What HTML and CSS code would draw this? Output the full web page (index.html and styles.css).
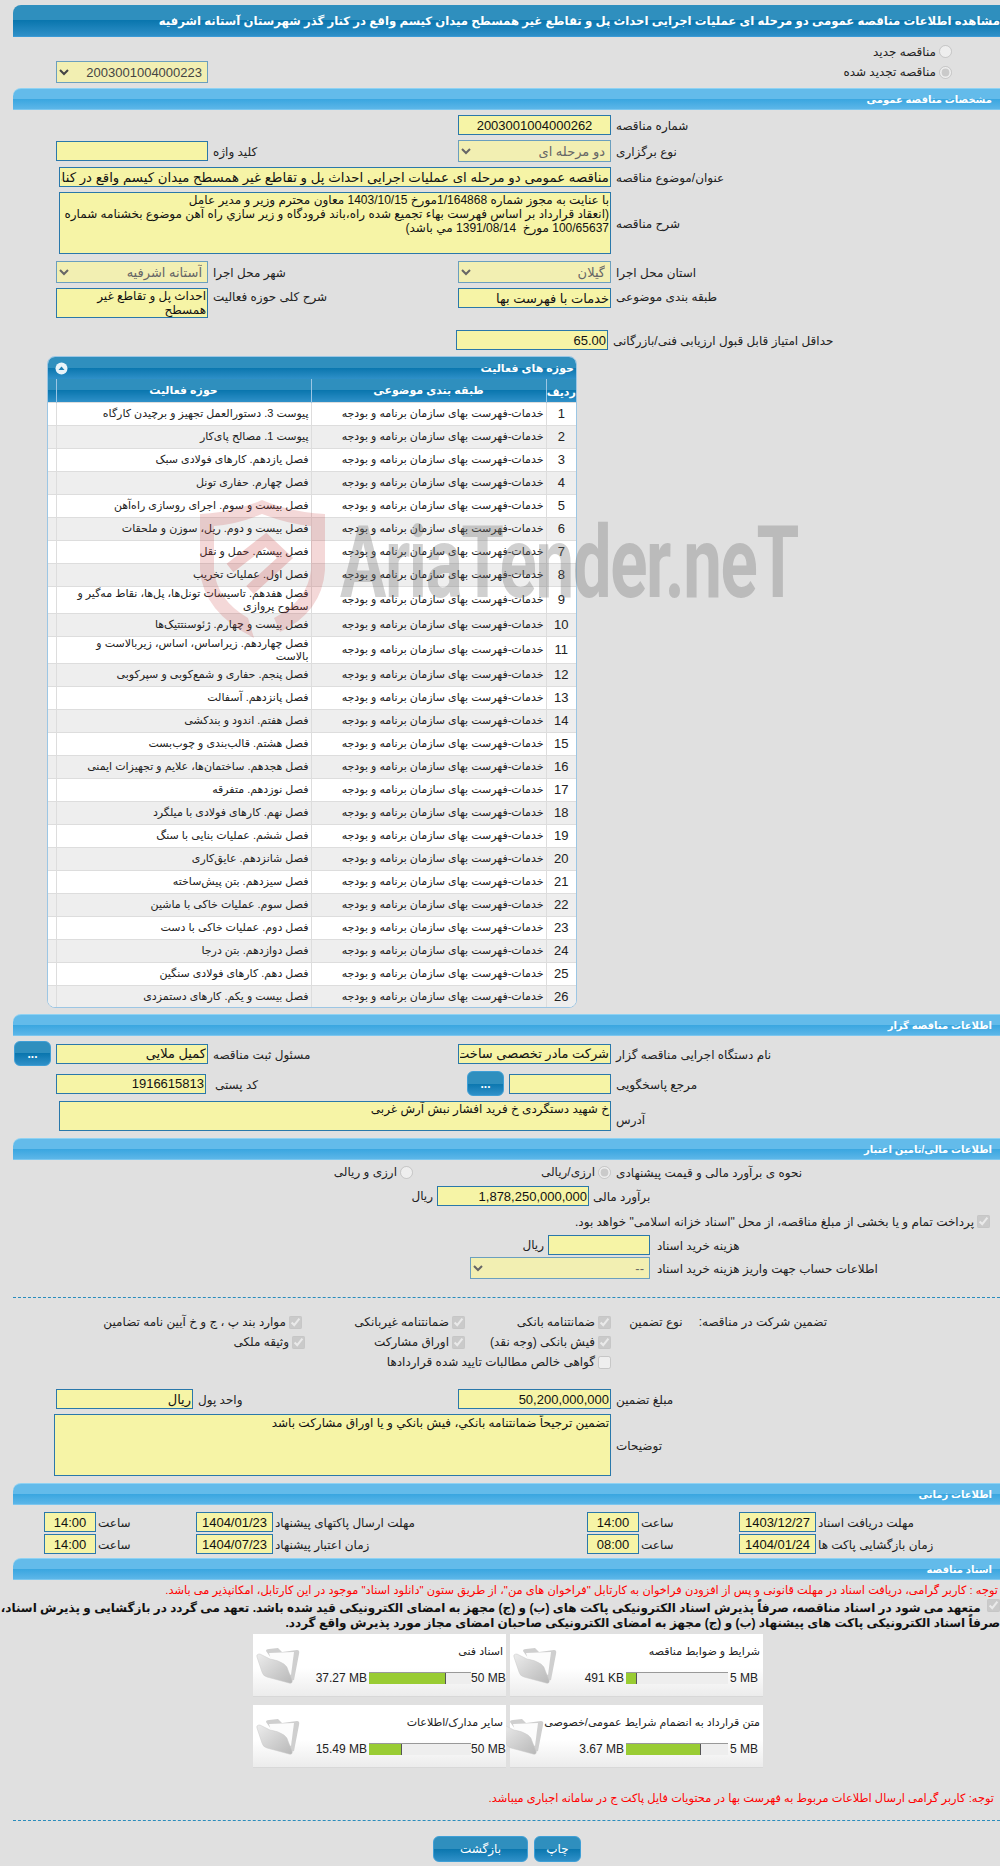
FILE: index.html
```html
<!DOCTYPE html>
<html lang="fa" dir="rtl">
<head>
    <meta charset="UTF-8">
    <title>مشاهده اطلاعات مناقصه</title>
    <link rel="stylesheet" href="styles.css">
</head>
<body>
<div class="page">

    <div class="main-title">مشاهده اطلاعات مناقصه عمومی دو مرحله ای عملیات اجرایی احداث پل و تقاطع غیر همسطح میدان کیسم واقع در کنار گذر شهرستان آستانه اشرفیه</div>

    <div class="radio-block">
        <div class="row radio-row">
            <label class="span-3 check-item radio-first"><input type="radio" name="kind" disabled> مناقصه جدید</label>
        </div>
        <div class="row">
            <label class="span-3 check-item radio-first"><input type="radio" name="kind" checked disabled> مناقصه تجدید شده</label>
            <select class="fld tall dark-val" disabled><option>2003001004000223</option></select>
        </div>
    </div>

    <div class="sec-title">مشخصات مناقصه عمومی</div>
    <div class="sec-body">
        <div class="row">
            <span class="lbl">شماره مناقصه</span>
            <input class="fld center-val" type="text" value="2003001004000262" readonly>
        </div>
        <div class="row">
            <span class="lbl">نوع برگزاری</span>
            <select class="fld tall" disabled><option>دو مرحله ای</option></select>
            <span class="lbl">کلید واژه</span>
            <input class="fld" type="text" readonly>
        </div>
        <div class="row">
            <span class="lbl">عنوان/موضوع مناقصه</span>
            <input class="fld wide" type="text" value="مناقصه عمومی دو مرحله ای عملیات اجرایی احداث پل و تقاطع غیر همسطح میدان کیسم واقع در کنار گذر شهرستان آستانه اشرفیه" readonly>
        </div>
        <div class="row">
            <span class="lbl">شرح مناقصه</span>
            <textarea class="fld wide desc" readonly>با عنایت به مجوز شماره 1/164868مورخ 1403/10/15 معاون محترم وزیر و مدیر عامل
(انعقاد قرارداد بر اساس فهرست بهاء تجمیع شده راه،باند فرودگاه و زیر سازي راه آهن موضوع بخشنامه شماره
100/65637 مورخ  1391/08/14 مي باشد)</textarea>
        </div>
        <div class="row gap-top">
            <span class="lbl">استان محل اجرا</span>
            <select class="fld tall" disabled><option>گیلان</option></select>
            <span class="lbl">شهر محل اجرا</span>
            <select class="fld tall" disabled><option>آستانه اشرفیه</option></select>
        </div>
        <div class="row top-row">
            <span class="lbl">طبقه بندی موضوعی</span>
            <input class="fld" type="text" value="خدمات با فهرست بها" readonly>
            <span class="lbl">شرح کلی حوزه فعالیت</span>
            <textarea class="fld activity" readonly>احداث پل و تقاطع غیر همسطح</textarea>
        </div>
        <div class="row score-row">
            <span class="lbl">حداقل امتیاز قابل قبول ارزیابی فنی/بازرگانی</span>
            <input class="fld" type="text" value="65.00" readonly>
        </div>
    </div>

    <div class="panel">
        <div class="panel-head">
            <span>حوزه های فعالیت</span>
            <svg class="collapse" width="13" height="13" viewBox="0 0 13 13"><circle cx="6.5" cy="6.5" r="6" fill="#e8f3f9"/><path d="M3.5 8 L6.5 4.5 L9.5 8 Z" fill="#1f80b4"/></svg>
        </div>
        <table class="grid">
            <colgroup><col class="c-num"><col class="c-cat"><col class="c-act"><col class="c-pad"></colgroup>
            <tr><th class="th-num">ردیف</th><th>طبقه بندی موضوعی</th><th>حوزه فعالیت</th><th></th></tr>
            <tr><td class="num">1</td><td>خدمات-فهرست بهای سازمان برنامه و بودجه</td><td>پیوست 3. دستورالعمل تجهیز و برچیدن کارگاه</td><td></td></tr>
            <tr><td class="num">2</td><td>خدمات-فهرست بهای سازمان برنامه و بودجه</td><td>پیوست 1. مصالح پای‌کار</td><td></td></tr>
            <tr><td class="num">3</td><td>خدمات-فهرست بهای سازمان برنامه و بودجه</td><td>فصل یازدهم. کارهای فولادی سبک</td><td></td></tr>
            <tr><td class="num">4</td><td>خدمات-فهرست بهای سازمان برنامه و بودجه</td><td>فصل چهارم. حفاری تونل</td><td></td></tr>
            <tr><td class="num">5</td><td>خدمات-فهرست بهای سازمان برنامه و بودجه</td><td>فصل بیست و سوم. اجرای روسازی راه‌آهن</td><td></td></tr>
            <tr><td class="num">6</td><td>خدمات-فهرست بهای سازمان برنامه و بودجه</td><td>فصل بیست و دوم. ریل، سوزن و ملحقات</td><td></td></tr>
            <tr><td class="num">7</td><td>خدمات-فهرست بهای سازمان برنامه و بودجه</td><td>فصل بیستم. حمل و نقل</td><td></td></tr>
            <tr><td class="num">8</td><td>خدمات-فهرست بهای سازمان برنامه و بودجه</td><td>فصل اول. عملیات تخریب</td><td></td></tr>
            <tr class="two-line"><td class="num">9</td><td>خدمات-فهرست بهای سازمان برنامه و بودجه</td><td>فصل هفدهم. تاسیسات تونل‌ها، پل‌ها، نقاط مه‌گیر و<br>سطوح پروازی</td><td></td></tr>
            <tr><td class="num">10</td><td>خدمات-فهرست بهای سازمان برنامه و بودجه</td><td>فصل بیست و چهارم. ژئوسنتتیک‌ها</td><td></td></tr>
            <tr class="two-line"><td class="num">11</td><td>خدمات-فهرست بهای سازمان برنامه و بودجه</td><td>فصل چهاردهم. زیراساس، اساس، زیربالاست  و<br>بالاست</td><td></td></tr>
            <tr><td class="num">12</td><td>خدمات-فهرست بهای سازمان برنامه و بودجه</td><td>فصل پنجم. حفاری و شمع‌کوبی و سپرکوبی</td><td></td></tr>
            <tr><td class="num">13</td><td>خدمات-فهرست بهای سازمان برنامه و بودجه</td><td>فصل پانزدهم. آسفالت</td><td></td></tr>
            <tr><td class="num">14</td><td>خدمات-فهرست بهای سازمان برنامه و بودجه</td><td>فصل هفتم. اندود و بندکشی</td><td></td></tr>
            <tr><td class="num">15</td><td>خدمات-فهرست بهای سازمان برنامه و بودجه</td><td>فصل هشتم. قالب‌بندی و چوب‌بست</td><td></td></tr>
            <tr><td class="num">16</td><td>خدمات-فهرست بهای سازمان برنامه و بودجه</td><td>فصل هجدهم. ساختمان‌ها، علایم و تجهیزات ایمنی</td><td></td></tr>
            <tr><td class="num">17</td><td>خدمات-فهرست بهای سازمان برنامه و بودجه</td><td>فصل نوزدهم. متفرقه</td><td></td></tr>
            <tr><td class="num">18</td><td>خدمات-فهرست بهای سازمان برنامه و بودجه</td><td>فصل نهم. کارهای فولادی با میلگرد</td><td></td></tr>
            <tr><td class="num">19</td><td>خدمات-فهرست بهای سازمان برنامه و بودجه</td><td>فصل ششم. عملیات بنایی با سنگ</td><td></td></tr>
            <tr><td class="num">20</td><td>خدمات-فهرست بهای سازمان برنامه و بودجه</td><td>فصل شانزدهم. عایق‌کاری</td><td></td></tr>
            <tr><td class="num">21</td><td>خدمات-فهرست بهای سازمان برنامه و بودجه</td><td>فصل سیزدهم. بتن پیش‌ساخته</td><td></td></tr>
            <tr><td class="num">22</td><td>خدمات-فهرست بهای سازمان برنامه و بودجه</td><td>فصل سوم. عملیات خاکی با ماشین</td><td></td></tr>
            <tr><td class="num">23</td><td>خدمات-فهرست بهای سازمان برنامه و بودجه</td><td>فصل دوم. عملیات خاکی با دست</td><td></td></tr>
            <tr><td class="num">24</td><td>خدمات-فهرست بهای سازمان برنامه و بودجه</td><td>فصل دوازدهم. بتن درجا</td><td></td></tr>
            <tr><td class="num">25</td><td>خدمات-فهرست بهای سازمان برنامه و بودجه</td><td>فصل دهم. کارهای فولادی سنگین</td><td></td></tr>
            <tr><td class="num">26</td><td>خدمات-فهرست بهای سازمان برنامه و بودجه</td><td>فصل بیست و یکم. کارهای دستمزدی</td><td></td></tr>
        </table>
    </div>

    <div class="sec-title after-panel">اطلاعات مناقصه گزار</div>
    <div class="sec-body">
        <div class="row row-btn">
            <span class="lbl">نام دستگاه اجرایی مناقصه گزار</span>
            <input class="fld" type="text" value="شرکت مادر تخصصی ساخت و توسعه زیربناهای حمل و نقل" readonly>
            <span class="lbl">مسئول ثبت مناقصه</span>
            <input class="fld" type="text" value="کمیل ملایی" readonly>
            <button class="btn btn-dots" type="button">...</button>
        </div>
        <div class="row row-ref">
            <span class="lbl">مرجع پاسخگویی</span>
            <input class="fld" type="text" readonly>
            <button class="btn btn-dots" type="button">...</button>
            <span class="lbl lbl-postal">کد پستی</span>
            <input class="fld postal" type="text" value="1916615813" readonly>
        </div>
        <div class="row">
            <span class="lbl lbl-low">آدرس</span>
            <textarea class="fld wide addr" readonly>خ شهید دستگردی خ فرید افشار نبش آرش غربی</textarea>
        </div>
    </div>

    <div class="sec-title after-addr">اطلاعات مالی/تامین اعتبار</div>
    <div class="finance">
        <div class="line line-mode">
            <span class="lbl-f">نحوه ی برآورد مالی و قیمت پیشنهادی</span>
            <label class="check-item mode-a"><input type="radio" name="cur" checked disabled> ارزی/ریالی</label>
            <label class="check-item mode-b"><input type="radio" name="cur" disabled> ارزی و ریالی</label>
        </div>
        <div class="line line-budget">
            <span class="lbl-f budget-lbl">برآورد مالی</span>
            <input class="fld" type="text" value="1,878,250,000,000" readonly>
            <span class="unit">ریال</span>
        </div>
        <label class="check-item line-treasury"><input type="checkbox" checked disabled> پرداخت تمام و یا بخشی از مبلغ مناقصه، از محل "اسناد خزانه اسلامی" خواهد بود.</label>
        <div class="line line-cost">
            <span class="lbl-f cost-lbl">هزینه خرید اسناد</span>
            <input class="fld cost" type="text" readonly>
            <span class="unit">ریال</span>
        </div>
        <div class="line line-account">
            <span class="lbl-f cost-lbl">اطلاعات حساب جهت واریز هزینه خرید اسناد</span>
            <select class="fld tall account" disabled><option>--</option></select>
        </div>
    </div>

    <div class="dash"></div>

    <div class="guarantee">
        <div class="g-head"><span>تضمین شرکت در مناقصه:</span><span>نوع تضمین</span></div>
        <label class="check-item"><input type="checkbox" checked disabled> ضمانتنامه بانکی</label>
        <label class="check-item"><input type="checkbox" checked disabled> ضمانتنامه غیربانکی</label>
        <label class="check-item g-inset"><input type="checkbox" checked disabled> موارد بند پ ، ج و خ آیین نامه تضامین</label>
        <span></span>
        <label class="check-item"><input type="checkbox" checked disabled> فیش بانکی (وجه نقد)</label>
        <label class="check-item"><input type="checkbox" checked disabled> اوراق مشارکت</label>
        <label class="check-item"><input type="checkbox" checked disabled> وثیقه ملکی</label>
        <span></span>
        <label class="check-item g-wide"><input type="checkbox" disabled> گواهی خالص مطالبات تایید شده قراردادها</label>
    </div>

    <div class="sec-body amount">
        <div class="row row-amount">
            <span class="lbl">مبلغ تضمین</span>
            <input class="fld" type="text" value="50,200,000,000" readonly>
            <span class="lbl">واحد پول</span>
            <input class="fld" type="text" value="ریال" readonly>
        </div>
        <div class="row">
            <span class="lbl">توضیحات</span>
            <textarea class="fld wide note" readonly>تضمین ترجیحاً ضمانتنامه بانکي، فيش بانکي و يا اوراق مشارکت باشد</textarea>
        </div>
    </div>

    <div class="sec-title after-note">اطلاعات زمانی</div>
    <div class="times">
        <span class="lbl">مهلت دریافت اسناد</span>
        <input class="fld center-val" type="text" value="1403/12/27" readonly>
        <span class="lbl">ساعت</span>
        <input class="fld center-val" type="text" value="14:00" readonly>
        <span class="lbl">مهلت ارسال پاکتهای پیشنهاد</span>
        <input class="fld center-val" type="text" value="1404/01/23" readonly>
        <span class="lbl">ساعت</span>
        <input class="fld center-val" type="text" value="14:00" readonly>

        <span class="lbl">زمان بازگشایی پاکت ها</span>
        <input class="fld center-val" type="text" value="1404/01/24" readonly>
        <span class="lbl">ساعت</span>
        <input class="fld center-val" type="text" value="08:00" readonly>
        <span class="lbl">زمان اعتبار پیشنهاد</span>
        <input class="fld center-val" type="text" value="1404/07/23" readonly>
        <span class="lbl">ساعت</span>
        <input class="fld center-val" type="text" value="14:00" readonly>
    </div>

    <div class="sec-title after-times">اسناد مناقصه</div>
    <p class="warn warn-top">توجه : کاربر گرامی، دریافت اسناد در مهلت قانونی و پس از افزودن فراخوان به کارتابل "فراخوان های من"، از طریق ستون "دانلود اسناد" موجود در این کارتابل، امکانپذیر می باشد.</p>
    <p class="pledge"><input type="checkbox" checked disabled> متعهد می شود در اسناد مناقصه، صرفاً پذیرش اسناد الکترونیکی پاکت های (ب) و (ج) مجهز به امضای الکترونیکی قید شده باشد. تعهد می گردد در بازگشایی و پذیرش اسناد،<br>صرفاً اسناد الکترونیکی پاکت های پیشنهاد (ب) و (ج) مجهز به امضای الکترونیکی صاحبان امضای مجاز مورد پذیرش واقع گردد.</p>

    <svg width="0" height="0" class="defs">
        <defs>
            <linearGradient id="fold" x1="0" y1="0" x2="1" y2="1"><stop offset="0" stop-color="#ececec"/><stop offset="1" stop-color="#b8b8b8"/></linearGradient>
            <symbol id="folder" viewBox="0 0 44 38">
                <path d="M10 4 Q10 2 13 2 L22 1 L26 5 L41 3 Q44 3 43 7 L38 33 L32 35 Z" fill="#cfcfcf"/>
                <path d="M13 6 L38 5 L35 28 L17 20 Z" fill="#fcfcfc"/>
                <path d="M1 10 Q0 7 4 7 L14 12 Q22 13 28 17 Q31 19 32 23 L36 33 Q37 37 33 36 L11 30 Q7 29 6 25 Z" fill="url(#fold)" stroke="#c8c8c8" stroke-width=".5"/>
            </symbol>
        </defs>
    </svg>

    <div class="tiles">
        <div class="tile">
            <div class="tile-info">
                <div class="tile-name">شرایط و ضوابط مناقصه</div>
                <div class="meter"><span class="max">5 MB</span><span class="track"><span class="fill" style="width:11%"></span></span><span class="used">491 KB</span></div>
            </div>
            <svg class="folder"><use href="#folder"/></svg>
        </div>
        <div class="tile">
            <div class="tile-info">
                <div class="tile-name">اسناد فنی</div>
                <div class="meter"><span class="max">50 MB</span><span class="track"><span class="fill" style="width:75%"></span></span><span class="used">37.27 MB</span></div>
            </div>
            <svg class="folder"><use href="#folder"/></svg>
        </div>
        <div class="tile">
            <div class="tile-info">
                <div class="tile-name">متن قرارداد به انضمام شرایط عمومی/خصوصی</div>
                <div class="meter"><span class="max">5 MB</span><span class="track"><span class="fill" style="width:74%"></span></span><span class="used">3.67 MB</span></div>
            </div>
            <svg class="folder"><use href="#folder"/></svg>
        </div>
        <div class="tile">
            <div class="tile-info">
                <div class="tile-name">سایر مدارک/اطلاعات</div>
                <div class="meter"><span class="max">50 MB</span><span class="track"><span class="fill" style="width:32%"></span></span><span class="used">15.49 MB</span></div>
            </div>
            <svg class="folder"><use href="#folder"/></svg>
        </div>
    </div>

    <p class="warn warn-bottom">توجه: کاربر گرامی ارسال اطلاعات مربوط به فهرست بها در محتویات فایل پاکت ج در سامانه اجباری میباشد.</p>

    <div class="dash dash-end"></div>

    <div class="actions">
        <button class="btn btn-print" type="button">چاپ</button>
        <button class="btn btn-back" type="button">بازگشت</button>
    </div>

    <!-- watermark -->
    <svg class="wm-shield" width="126" height="140" viewBox="0 0 126 140">
        <path d="M0 14 Q35 12 62 0 Q90 12 125 14 L125 70 Q122 112 80 132 L74 118 Q108 100 111 70 L111 26 Q88 24 62 14 Q38 24 14 26 L14 70 Q17 100 48 118 L54 138 Q3 112 0 70 Z" fill="#c83c3c" opacity=".2"/>
        <path d="M30 68 L66 40 L85 58 L50 90" fill="none" stroke="#c83c3c" stroke-width="11" opacity=".24"/>
    </svg>
    <div class="wm-text">AriaTender.neT</div>
</div>
</body>
</html>
```

FILE: styles.css
```css
* {
    box-sizing: border-box;
}

html, body {
    margin: 0;
    padding: 0;
}

body {
    background-color: #e0e0e0;
    font-family: "Liberation Sans", "DejaVu Sans", sans-serif;
    font-size: 12px;
    color: #222;
}

.page {
    position: relative;
    width: 1000px;
    height: 1866px;
    overflow: hidden;
}

/* title bars */
.main-title {
    margin: 5px 0 0 13px;
    height: 32px;
    line-height: 32px;
    border-radius: 8px 0 0 0;
    border-bottom: 1px solid #3a9ad6;
    background: linear-gradient(#2f8fbe 0, #2f8fbe 50%, #0a76ae 50%, #2f90c8 100%);
    color: #fff;
    font-size: 11.7px;
    font-weight: bold;
    white-space: nowrap;
}

.sec-title {
    margin-left: 13px;
    height: 22px;
    line-height: 21px;
    padding-right: 8px;
    border-radius: 8px 0 0 0;
    border-top: 1px solid #8ed2f3;
    border-bottom: 1px solid #7cc6ee;
    background: linear-gradient(#63bbea 0, #63bbea 50%, #39a6e0 50%, #5cb6e8 100%);
    color: #fff;
    font-size: 10px;
    font-weight: bold;
}

.after-panel { margin-top: 6px; }
.after-addr { margin-top: 7px; }
.after-note { margin-top: 7px; }
.after-times { margin-top: 4px; }

/* form rows */
.radio-block {
    display: flex;
    flex-direction: column;
    height: 51px;
    padding-top: 5px;
}

.radio-row {
    height: 19px;
}

.sec-body {
    display: flex;
    flex-direction: column;
    gap: 5px;
    padding-top: 5px;
}

.row {
    display: grid;
    grid-template-columns: 384px 153px 240px 152px;
    column-gap: 5px;
    align-items: center;
}

.top-row {
    align-items: start;
}

.gap-top {
    margin-top: 2px;
}

.score-row {
    grid-template-columns: 387px 152px;
    margin-top: 7px;
}

.row-btn {
    grid-template-columns: 384px 153px 240px 152px 37px;
}

.row-ref {
    grid-template-columns: 384px 102px 38px 248px 152px;
}

.row-amount {
    grid-template-columns: 384px 153px 255px 137px;
}

.span-3 {
    grid-column: span 3;
}

.lbl {
    text-align: left;
    white-space: nowrap;
    padding-top: 2px;
}

.lbl-low {
    padding-top: 8px;
}

.lbl-postal {
    padding-left: 2px;
}

/* fields */
.fld {
    display: block;
    width: 100%;
    height: 20px;
    margin: 0;
    padding: 0 1px;
    border: 1px solid #2a78aa;
    border-radius: 0;
    background-color: #f6f4a6;
    font-family: "Liberation Sans", "DejaVu Sans", sans-serif;
    font-size: 13px;
    color: #111;
    outline: none;
}

select.fld {
    opacity: 1;
    padding: 0 1px 0 4px;
    border-color: #6b9fbe;
    background-color: #f2efb2;
    color: #666;
}

select.dark-val {
    color: #444;
}

.tall {
    height: 22px;
}

.wide {
    grid-column: span 3;
    width: 552px;
    font-size: 13.3px;
}

.desc {
    height: 62px;
    line-height: 14px;
    font-size: 12px;
    resize: none;
    overflow: hidden;
    white-space: pre;
}

.activity {
    height: 30px;
    line-height: 14px;
    font-size: 12px;
    resize: none;
    overflow: hidden;
}

.addr {
    height: 30px;
    font-size: 12px;
    resize: none;
    overflow: hidden;
}

.note {
    width: 557px;
    height: 62px;
    font-size: 12px;
    line-height: 16px;
    resize: none;
    overflow: hidden;
}

.postal {
    width: 150px;
    margin-right: 2px;
}

input.fld[type="text"] {
    text-align: right;
}

input.center-val[type="text"] {
    text-align: center;
}

/* activity table panel */
.panel {
    margin: 6px 423px 0 47px;
    height: 652px;
    border: 1px solid #9cc6e4;
    border-radius: 8px;
    overflow: hidden;
    background: #fff;
}

.panel-head {
    display: flex;
    justify-content: space-between;
    align-items: center;
    height: 22px;
    padding: 0 2px 0 7px;
    background: linear-gradient(#2f8fbe 0, #2f8fbe 50%, #0a76ae 50%, #2f90c8 100%);
    color: #fff;
    font-size: 11px;
    font-weight: bold;
}

.collapse {
    display: block;
}

.grid {
    width: 528px;
    table-layout: fixed;
    border-collapse: collapse;
    font-size: 11px;
}

.c-num { width: 30px; }
.c-cat { width: 235px; }
.c-act { width: 255px; }
.c-pad { width: 10px; }

.grid th {
    height: 23px;
    border-left: 1px solid #9cc6e4;
    background: linear-gradient(#2f8fbe 0, #2f8fbe 50%, #0a76ae 50%, #2f90c8 100%);
    color: #fff;
    font-size: 11px;
    padding: 0;
}

.grid .th-num {
    padding-top: 4px;
}

.grid td {
    height: 23px;
    padding: 0 2px;
    border-left: 1px solid #ddd;
    border-top: 1px solid #ddd;
    line-height: 13px;
    text-align: right;
}

.grid tr:nth-child(odd) td {
    background-color: #eee;
}

.grid .two-line td {
    height: 27px;
}

.grid .num {
    text-align: center;
    font-size: 13px;
}

/* finance block */
.finance {
    height: 137px;
    padding-top: 5px;
}

.line {
    display: flex;
    align-items: center;
}

.line-mode {
    height: 14px;
}

.lbl-f {
    width: 384px;
    text-align: left;
    white-space: nowrap;
    padding-top: 2px;
}

.check-item {
    display: flex;
    align-items: center;
    gap: 3px;
    white-space: nowrap;
}

.check-item input {
    margin: 0;
    flex: none;
}

.radio-first {
    padding-right: 48px;
}

.mode-a {
    margin-right: 5px;
    width: 198px;
}

.line-budget {
    margin-top: 7px;
    height: 20px;
}

.budget-lbl {
    width: 411px;
    padding-left: 4px;
}

.line-budget .fld {
    width: 152px;
}

.unit {
    margin-right: 4px;
}

.line-treasury {
    margin: 8px 10px 0 0;
    height: 15px;
}

.line-cost {
    margin-top: 6px;
    height: 20px;
}

.cost-lbl {
    width: 350px;
    padding-left: 7px;
}

.cost {
    width: 102px;
}

.line-account {
    margin-top: 2px;
    height: 22px;
}

.account {
    width: 180px;
}

.dash {
    margin: 0 0 0 13px;
    border-top: 1px dashed #2a8cbc;
}

/* guarantee types */
.guarantee {
    display: grid;
    grid-template-columns: 389px 146px 160px 305px;
    grid-auto-rows: 20px;
    align-items: center;
    margin-top: 14px;
}

.g-head {
    display: flex;
    gap: 16px;
    padding-right: 173px;
    white-space: nowrap;
}

.g-inset {
    padding-right: 3px;
}

.g-wide {
    grid-column: span 3;
}

.amount {
    margin-top: 12px;
}

/* times */
.times {
    display: grid;
    grid-template-columns: 182px 77px 96px 52px 310px 77px 96px 52px;
    grid-auto-rows: 20px;
    column-gap: 2px;
    row-gap: 2px;
    align-items: center;
    padding-top: 7px;
}

/* documents */
.warn {
    margin: 0;
    color: #f00;
    white-space: nowrap;
}

.warn-top {
    margin: 3px 2px 0 0;
    font-size: 11.4px;
    line-height: 14px;
}

.pledge {
    margin: 2px 0 0 0;
    font-size: 12px;
    font-weight: bold;
    line-height: 15px;
    white-space: nowrap;
    color: #111;
}

.pledge input {
    margin: 0 0 0 3px;
}

.defs {
    position: absolute;
}

.tiles {
    display: grid;
    grid-template-columns: 253px 253px;
    grid-auto-rows: 63px;
    gap: 8px 4px;
    width: 510px;
    margin: 3px 237px 0 0;
}

.tile {
    display: flex;
    background: linear-gradient(#fff 0, #fff 55%, #ececec 100%);
    border-bottom: 1px solid #d8d8d8;
}

.tile-info {
    flex: 1;
    padding: 11px 3px 0 0;
    font-size: 11px;
}

.tile-name {
    height: 26px;
    white-space: nowrap;
}

.meter {
    display: flex;
    align-items: center;
    height: 13px;
}

.max {
    width: 32px;
    padding-right: 2px;
    direction: ltr;
    text-align: right;
    font-size: 12px;
    white-space: nowrap;
}

.track {
    display: block;
    width: 102px;
    height: 12px;
    direction: ltr;
    background-color: #eee;
    border-top: 1px solid #999;
}

.fill {
    display: block;
    height: 11px;
    background-color: #9c3;
    border-right: 1px solid #555;
}

.used {
    margin-right: 2px;
    direction: ltr;
    font-size: 12px;
    white-space: nowrap;
}

.folder {
    flex: none;
    width: 44px;
    height: 38px;
    margin: 13px 0 0 3px;
}

.warn-bottom {
    margin: 22px 6px 0 0;
    font-size: 11.4px;
    line-height: 16px;
}

.dash-end {
    margin-top: 14px;
}

.actions {
    display: flex;
    gap: 6px;
    margin: 15px 419px 0 0;
}

.btn {
    border: 1px solid #3f9fd6;
    border-radius: 6px;
    background: linear-gradient(#2f8fbe 0, #2f8fbe 50%, #0a76ae 50%, #2f90c8 100%);
    color: #fff;
    font-family: "Liberation Sans", "DejaVu Sans", sans-serif;
    font-size: 12px;
    padding: 0;
}

.btn-dots {
    height: 25px;
    width: 37px;
    font-weight: bold;
}

.btn-print {
    width: 47px;
    height: 26px;
}

.btn-back {
    width: 95px;
    height: 26px;
}

/* watermark */
.wm-shield {
    position: absolute;
    left: 200px;
    top: 500px;
    pointer-events: none;
}

.wm-text {
    position: absolute;
    left: 340px;
    top: 513px;
    direction: ltr;
    font-family: Roboto, "Liberation Sans", sans-serif;
    font-size: 100px;
    font-weight: bold;
    line-height: 100px;
    letter-spacing: -2px;
    color: rgba(110, 110, 110, 0.32);
    white-space: nowrap;
    transform: scaleX(.69);
    transform-origin: left top;
    pointer-events: none;
}
```
